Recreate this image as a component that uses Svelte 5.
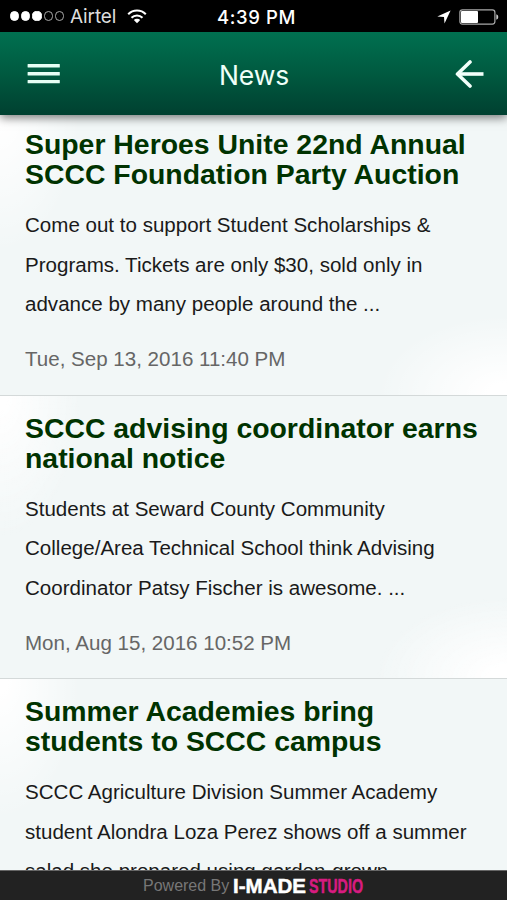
<script lang="ts">
  type Story = {
    title: string[];
    text: string[];
    date?: string;
  };

  const signal = [true, true, true, false, false];

  const stories: Story[] = [
    {
      title: ["Super Heroes Unite 22nd Annual", "SCCC Foundation Party Auction"],
      text: [
        "Come out to support Student Scholarships &",
        "Programs. Tickets are only $30, sold only in",
        "advance by many people around the ...",
      ],
      date: "Tue, Sep 13, 2016 11:40 PM",
    },
    {
      title: ["SCCC advising coordinator earns", "national notice"],
      text: [
        "Students at Seward County Community",
        "College/Area Technical School think Advising",
        "Coordinator Patsy Fischer is awesome. ...",
      ],
      date: "Mon, Aug 15, 2016 10:52 PM",
    },
    {
      title: ["Summer Academies bring", "students to SCCC campus"],
      text: [
        "SCCC Agriculture Division Summer Academy",
        "student Alondra Loza Perez shows off a summer",
        "salad she prepared using garden-grown",
      ],
    },
  ];
</script>

<div class="screen">
  <div class="status">
    <div class="carrier">
      <div class="dots">
        {#each signal as on}
          <i class:on></i>
        {/each}
      </div>
      <span>Airtel</span>
      <svg class="wifi" width="20" height="15" viewBox="0 0 20 15" fill="none" stroke="#fff">
        <path d="M1.2 5.2a12.4 12.4 0 0 1 17.6 0" stroke-width="2.1" />
        <path d="M4.5 8.7a7.8 7.8 0 0 1 11 0" stroke-width="2.1" />
        <path d="M10 14.3 6.8 11a4.5 4.5 0 0 1 6.4 0Z" fill="#fff" stroke="none" />
      </svg>
    </div>
    <time>4:39 PM</time>
    <div class="power">
      <svg width="14" height="14" viewBox="0 0 14 14">
        <path d="M13.6.4 7.5 13.6 7 7 .3 6.6Z" fill="#fff" />
      </svg>
      <svg width="40" height="16" viewBox="0 0 40 16">
        <rect x=".9" y=".9" width="35" height="14.2" rx="2.5" fill="none" stroke="#aaa" stroke-width="1.2" />
        <rect x="2" y="2" width="17" height="12" rx="1" fill="#fff" />
        <path d="M37.3 5.3q2 .6 2 2.7t-2 2.7Z" fill="#ccc" />
      </svg>
    </div>
  </div>

  <header>
    <button type="button" aria-label="Menu">
      <svg width="33" height="20" viewBox="0 0 33 20" fill="#e6fff5">
        <rect x=".6" width="32.2" height="3.4" y=".1" rx=".5" />
        <rect x=".6" width="32.2" height="3.4" y="8" rx=".5" />
        <rect x=".6" width="32.2" height="3.4" y="15.9" rx=".5" />
      </svg>
    </button>
    <h1>News</h1>
    <button type="button" aria-label="Back">
      <svg width="29" height="28" viewBox="0 0 29 28" fill="none" stroke="#f2fffa" stroke-width="3.6" stroke-linejoin="round">
        <path d="M15 2 2.5 14 15 26" stroke-linecap="round" />
        <path d="M3 14h25.5" />
      </svg>
    </button>
  </header>

  <main>
    {#each stories as story}
      <article>
        <h2>
          {#each story.title as line}
            <span>{line}</span>
          {/each}
        </h2>
        <p>
          {#each story.text as line}
            <span>{line}</span>
          {/each}
        </p>
        {#if story.date}
          <time>{story.date}</time>
        {/if}
      </article>
    {/each}
  </main>

  <footer>
    <span>Powered By</span>
    <svg width="136" height="27" viewBox="0 0 136 27">
      <text class="made" x="0" y="21" textLength="73" lengthAdjust="spacingAndGlyphs">I-MADE</text>
      <text class="studio" x="76" y="21" textLength="54" lengthAdjust="spacingAndGlyphs">STUDIO</text>
    </svg>
  </footer>
</div>

<style>
  :global(body) {
    margin: 0;
    background: #000;
  }

  .screen {
    width: 507px;
    height: 900px;
    display: flex;
    flex-direction: column;
    overflow: hidden;
    font-family: "Liberation Sans", Arial, sans-serif;
    background: #f2f7f7;
  }

  .status {
    flex: none;
    height: 32px;
    display: grid;
    grid-template-columns: 1fr auto 1fr;
    align-items: center;
    padding: 0 8px 0 10px;
    box-sizing: border-box;
    color: #fff;
    background: #000;
    font-family: Inter, sans-serif;
  }

  .carrier {
    display: flex;
    align-items: center;
    color: #ddd;
    font-size: 19px;
    letter-spacing: -0.1px;
  }

  .dots {
    display: flex;
    gap: 2px;
    margin-right: 6px;
  }

  .dots i {
    width: 9.2px;
    height: 9.2px;
    box-sizing: border-box;
    border: 1px solid #aaa;
    border-radius: 50%;
  }

  .dots i.on {
    border-color: #fff;
    background: #fff;
  }

  .wifi {
    margin-left: 11px;
  }

  .status time {
    padding: 2px 0 0 4px;
    font-size: 18.5px;
    font-weight: 500;
    letter-spacing: 0.6px;
  }

  .power {
    display: flex;
    justify-content: flex-end;
    align-items: center;
    gap: 8px;
    padding-top: 2px;
  }

  header {
    position: relative;
    z-index: 1;
    flex: none;
    height: 83px;
    display: flex;
    align-items: center;
    justify-content: space-between;
    padding: 0 23px 0 27px;
    box-sizing: border-box;
    color: #effff8;
    background: linear-gradient(#007050, #005a40 50%, #004030);
    box-shadow: 0 3px 9px rgba(0, 0, 0, 0.5);
  }

  header button {
    display: flex;
    padding: 0;
    border: 0;
    background: transparent;
  }

  h1 {
    margin: 2px 7px 0 0;
    font-family: Inter, sans-serif;
    font-size: 26.5px;
    font-weight: 400;
    letter-spacing: -0.1px;
  }

  main {
    flex: 1;
    min-height: 0;
    overflow: hidden;
    margin-top: -3px;
  }

  article {
    height: 283.5px;
    box-sizing: border-box;
    padding: 17px 0 0 25px;
    border-bottom: 1px solid #d4d9d9;
    background:
      radial-gradient(ellipse 80px 140px at 0 0, #fff 10%, rgba(255, 255, 255, 0)),
      radial-gradient(ellipse 130px 80px at 100% 100%, #fff 15%, rgba(255, 255, 255, 0)),
      #f2f7f7;
  }

  h2,
  p {
    margin: 0;
  }

  h2 span,
  p span,
  article time {
    display: block;
    width: max-content;
    white-space: nowrap;
  }

  h2 {
    color: #003300;
    font-size: 28.4px;
    line-height: 30px;
  }

  p {
    margin-top: 16px;
    color: #1a1a1a;
    font-size: 20.55px;
    line-height: 39.7px;
  }

  article time {
    margin-top: 16px;
    color: #666;
    font-size: 20.55px;
    line-height: 38px;
  }

  footer {
    flex: none;
    position: relative;
    height: 30px;
    display: flex;
    align-items: center;
    gap: 4px;
    padding-left: 143px;
    box-sizing: border-box;
    border-top: 1px solid #666;
    color: #777;
    background: #222;
    font-size: 16px;
    line-height: 20px;
  }

  footer svg {
    overflow: visible;
  }

  .made,
  .studio {
    font-size: 20.5px;
    font-weight: 700;
    fill: #fff;
    stroke: #fff;
    stroke-width: 0.5px;
  }

  .studio {
    fill: #d81b80;
    stroke: #d81b80;
  }
</style>
